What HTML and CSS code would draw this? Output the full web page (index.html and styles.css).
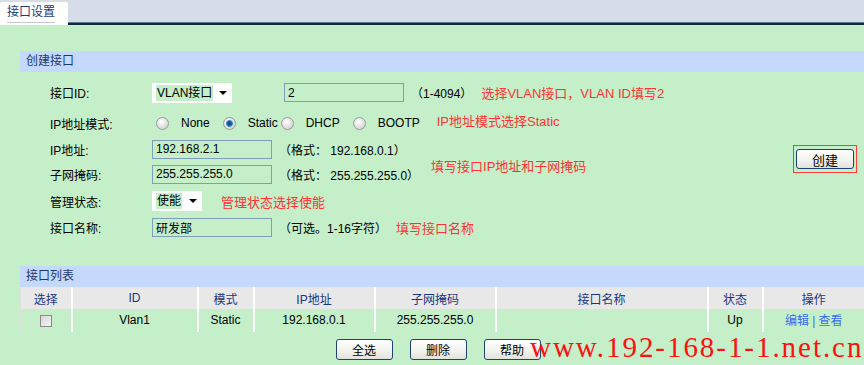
FILE: index.html
```html
<!DOCTYPE html>
<html lang="zh-CN">
<head>
  <meta charset="UTF-8" />
  <title>接口设置</title>
  <link rel="stylesheet" href="styles.css">
</head>
<body>

  <div class="tabbar">
    <div class="tab"><span>接口设置</span></div>
  </div>

  <div class="page">
    <div class="sec-head">创建接口</div>

    <div class="create">
      <div class="fields">
        <div class="row r1">
          <span class="lbl">接口ID:</span>
          <span class="select sel-type"><span class="sel-val">VLAN接口</span><i class="arrow"></i></span>
          <input class="txt vid" type="text" value="2" />
          <span class="hint">（1-4094）</span>
          <span class="note note-id">选择VLAN接口，VLAN ID填写2</span>
        </div>
        <div class="row r2">
          <span class="lbl">IP地址模式:</span>
          <label class="opt"><input type="radio" name="mode" />None</label>
          <label class="opt opt-static"><input type="radio" name="mode" checked />Static</label>
          <label class="opt"><input type="radio" name="mode" />DHCP</label>
          <label class="opt"><input type="radio" name="mode" />BOOTP</label>
          <span class="note note-mode">IP地址模式选择Static</span>
        </div>
        <div class="pair">
          <div class="pair-rows">
            <div class="row r3">
              <span class="lbl">IP地址:</span>
              <input class="txt" type="text" value="192.168.2.1" />
              <span class="hint">（格式： 192.168.0.1）</span>
            </div>
            <div class="row r4">
              <span class="lbl">子网掩码:</span>
              <input class="txt" type="text" value="255.255.255.0" />
              <span class="hint">（格式： 255.255.255.0）</span>
            </div>
          </div>
          <span class="note note-ip">填写接口IP地址和子网掩码</span>
        </div>
        <div class="row r5">
          <span class="lbl">管理状态:</span>
          <span class="select sel-state"><span class="sel-val">使能</span><i class="arrow"></i></span>
          <span class="note note-state">管理状态选择使能</span>
        </div>
        <div class="row r6">
          <span class="lbl">接口名称:</span>
          <input class="txt" type="text" value="研发部" />
          <span class="hint">（可选。1-16字符）</span>
          <span class="note note-name">填写接口名称</span>
        </div>
      </div>
      <div class="create-box"><button class="btn btn-create">创建</button></div>
    </div>

    <div class="sec-head">接口列表</div>
    <table class="list">
      <tr class="head">
        <th class="c-sel">选择</th>
        <th class="c-id">ID</th>
        <th class="c-mode">模式</th>
        <th class="c-ip">IP地址</th>
        <th class="c-mask">子网掩码</th>
        <th class="c-name">接口名称</th>
        <th class="c-state">状态</th>
        <th>操作</th>
      </tr>
      <tr>
        <td><input type="checkbox" class="chk" /></td>
        <td>Vlan1</td>
        <td>Static</td>
        <td>192.168.0.1</td>
        <td>255.255.255.0</td>
        <td></td>
        <td>Up</td>
        <td><a href="#">编辑</a> <a href="#" class="sep">|</a><a href="#">查看</a></td>
      </tr>
    </table>

    <div class="actions">
      <button class="btn">全选</button>
      <button class="btn">删除</button>
      <button class="btn">帮助</button>
    </div>
  </div>

  <div class="watermark">www.192-168-1-1.net.cn</div>

</body>
</html>
```

FILE: styles.css
```css
* { box-sizing: border-box; }
body {
  margin: 0;
  font-family: 'Liberation Sans', 'Noto Sans CJK SC', sans-serif;
  font-size: 12px;
  color: #000;
  background: #c4efc9;
  height: 365px;
  overflow: hidden;
  position: relative;
}

/* tab bar */
.tabbar {
  height: 25px;
  background: #d6dde9;
  border-bottom: 2px solid #0f2c3a;
  box-shadow: inset 0 -1px 0 #5d7d8c;
  display: flex;
  align-items: flex-end;
}
.tab {
  width: 68px;
  height: 23px;
  margin-bottom: -2px;
  background: #fff;
  border-radius: 2px 2px 0 0;
  padding: 0 0 0 7px;
}
.tab span {
  display: inline-block;
  color: #1b3a7c;
  font-size: 12px;
  line-height: 20px;
  border-bottom: 1px solid #c3c6cc;
  width: 48px;
}

.page { padding: 26px 0 0 20px; }

.sec-head {
  height: 21px;
  line-height: 21px;
  background: #c5d9fd;
  color: #1b3a6c;
  padding-left: 6px;
}

/* create form */
.create {
  display: flex;
  align-items: center;
  padding-top: 5px;
  margin-bottom: 25px;
}
.fields { flex: 1; padding-left: 30px; }
.row {
  display: flex;
  align-items: center;
}
.r1 { height: 31px; }
.r2 { height: 30px; }
.r3 { height: 22px; }
.r4 { height: 28px; }
.r5 { height: 26px; }
.r6 { height: 27px; }
.lbl { width: 102px; }

.select {
  display: flex;
  align-items: center;
  height: 20px;
  background: #fff;
  padding: 0 0 0 4px;
}
.sel-type { width: 80px; }
.sel-state { width: 50px; }
.sel-val {
  background: #c4efc9;
  line-height: 16px;
  padding: 0 1px;
  font-size: 12px;
}
.arrow {
  margin-left: auto;
  margin-right: 5px;
  width: 0;
  height: 0;
  border-left: 4px solid transparent;
  border-right: 4px solid transparent;
  border-top: 4px solid #000;
}

.txt {
  width: 120px;
  height: 19px;
  border: 1px solid #7f9db9;
  background: transparent;
  font: 12px 'Liberation Sans', 'Noto Sans CJK SC', sans-serif;
  padding: 0 3px;
  margin: 0;
  color: #000;
}
.vid { margin-left: 52px; }
.hint { margin-left: 7px; }
.r3 .hint, .r4 .hint, .r6 .hint { margin-left: 7px; }

.note {
  color: #ff3333;
  font-size: 13px;
  margin-left: 5px;
}
.note-id { margin-left: 9px; }
.note-mode { margin-left: 4px; margin-top: -6px; }
.note-ip { margin-left: 12px; margin-top: 4px; }
.note-state { margin-left: 19px; }
.note-name { margin-left: 9px; }

.pair { display: flex; align-items: center; }

.opt {
  display: flex;
  align-items: center;
  margin-right: 13px;
}
.opt:first-of-type { margin-left: 4px; }
.opt-static { margin-right: 3px; }
.opt input {
  appearance: none;
  width: 13px;
  height: 13px;
  margin: 0 12px 0 0;
  border: 1px solid #9b9b9b;
  border-radius: 50%;
  background: radial-gradient(circle at 40% 35%, #ffffff, #d8d8d8 70%, #c4c4c4);
}
.opt input:checked {
  background:
    radial-gradient(circle at 50% 50%, #0c3f7e 0, #1e6aa8 2.4px, #5aa0c8 3.3px, transparent 3.8px),
    radial-gradient(circle at 40% 35%, #ffffff, #d8d8d8 70%, #c4c4c4);
}

.create-box {
  border: 1px solid #ff3b3b;
  padding: 3px 2px;
  margin-right: 7px;
}

.btn {
  width: 57px;
  height: 21px;
  border: 1px solid #1c4470;
  border-radius: 3px;
  background: linear-gradient(#ffffff, #f1f1ed 60%, #e2e2dc);
  font: 12px 'Noto Sans CJK SC', sans-serif;
  color: #000;
  padding: 0;
  cursor: pointer;
}
.btn-create { width: 58px; height: 20px; font-size: 13px; display: block; }

/* interface list */
.list {
  width: 100%;
  border-collapse: collapse;
  border-left: 1px solid #dedede;
  border-bottom: 1px solid #dedede;
}
.list th, .list td {
  height: 22px;
  padding: 0;
  text-align: center;
  font-weight: normal;
  border-left: 2px solid #fff;
}
.list th:first-child, .list td:first-child { border-left: none; }
.list .head { background: #e8e8e8; color: #1b3680; }
.c-sel { width: 51px; }
.c-id { width: 126px; }
.c-mode { width: 56px; }
.c-ip { width: 121px; }
.c-mask { width: 121px; }
.c-name { width: 212px; }
.c-state { width: 55px; }

.chk {
  appearance: none;
  width: 12px;
  height: 12px;
  margin: 0;
  vertical-align: middle;
  border: 1px solid #8a8a8a;
  background: linear-gradient(135deg, #d8d8d8, #f4f4f4);
}
.list a { color: #3a6cf0; text-decoration: none; }
.list a.sep { margin-right: 3px; }

.actions {
  display: flex;
  justify-content: center;
  gap: 17px;
  margin-top: 7px;
  padding-right: 8px;
}

.watermark {
  position: absolute;
  left: 530px;
  top: 333px;
  font: 29px/29px 'Liberation Serif', serif;
  letter-spacing: 1.95px;
  color: #ff1010;
  white-space: nowrap;
}
```
